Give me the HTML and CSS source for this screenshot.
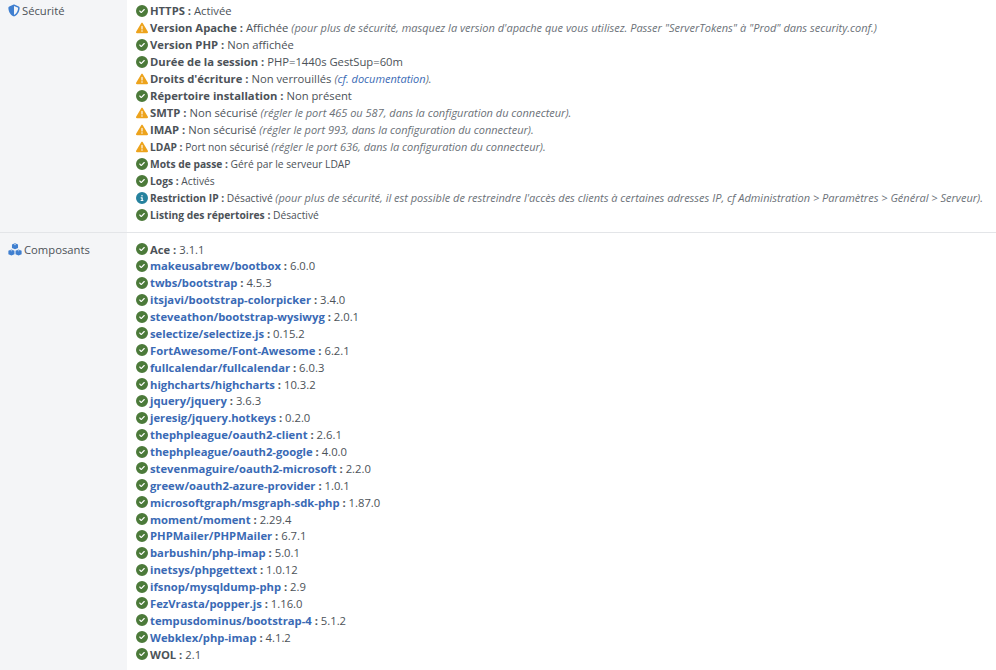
FILE: index.html
```html
<!DOCTYPE html>
<html lang="fr">
<head>
<meta charset="utf-8">
<title>Sécurité</title>
<link rel="stylesheet" href="styles.css">
</head>
<body>
<svg class="defs" width="0" height="0" aria-hidden="true">
  <symbol id="ok" viewBox="0 0 512 512"><path d="M256 512A256 256 0 1 0 256 0a256 256 0 1 0 0 512zM369 209L241 337c-9.400 9.400-24.600 9.400-33.900 0l-64-64c-9.400-9.400-9.400-24.600 0-33.900s24.600-9.400 33.900 0l47 47L335 175c9.400-9.400 24.600-9.400 33.900 0s9.400 24.600 0 33.900z"/></symbol>
  <symbol id="warn" viewBox="0 0 512 512"><path d="M256 32c14.200 0 27.300 7.500 34.500 19.800l216 368c7.300 12.400 7.300 27.700.2 40.100S486.300 480 472 480H40c-14.300 0-27.600-7.700-34.700-20.100s-7-27.800.2-40.100l216-368C228.700 39.500 241.800 32 256 32zm0 128c-13.300 0-24 10.700-24 24V296c0 13.300 10.700 24 24 24s24-10.700 24-24V184c0-13.300-10.700-24-24-24zm32 224a32 32 0 1 0-64 0 32 32 0 1 0 64 0z"/></symbol>
  <symbol id="info" viewBox="0 0 512 512"><path d="M256 512A256 256 0 1 0 256 0a256 256 0 1 0 0 512zM216 336h24V272H216c-13.300 0-24-10.700-24-24s10.700-24 24-24h48c13.300 0 24 10.700 24 24v88h8c13.300 0 24 10.700 24 24s-10.700 24-24 24H216c-13.300 0-24-10.700-24-24s10.700-24 24-24zm40-208a32 32 0 1 1 0 64 32 32 0 1 1 0-64z"/></symbol>
</svg>
<div class="panel">
  <section class="row">
    <div class="label">
      <svg class="label-icon" viewBox="0 0 512 512"><path d="M256 0c4.600 0 9.200 1 13.400 2.900L457.700 82.800c22 9.300 38.400 31 38.300 57.200-.5 99.200-41.300 280.700-213.600 363.200-16.700 8-36.100 8-52.800 0C57.300 420.700 16.500 239.200 16 140c-.1-26.200 16.300-47.900 38.300-57.200L242.700 2.900C246.800 1 251.400 0 256 0zm0 66.800V444.800C394 378 431.100 230.100 432 141.400L256 66.800z"/></svg>
      <span>Sécurité</span>
    </div>
    <ul class="list">
      <li class="item"><svg class="ic ok"><use href="#ok"/></svg><span><b>HTTPS :</b> Activée</span></li>
      <li class="item"><svg class="ic warn"><use href="#warn"/></svg><span><b>Version Apache :</b> Affichée <i class="note">(pour plus de sécurité, masquez la version d'apache que vous utilisez. Passer "ServerTokens" à "Prod" dans security.conf.)</i></span></li>
      <li class="item"><svg class="ic ok"><use href="#ok"/></svg><span><b>Version PHP :</b> Non affichée</span></li>
      <li class="item"><svg class="ic ok"><use href="#ok"/></svg><span><b>Durée de la session :</b> PHP=1440s GestSup=60m</span></li>
      <li class="item"><svg class="ic warn"><use href="#warn"/></svg><span><b>Droits d'écriture :</b> Non verrouillés <i class="note">(<a href="#">cf. documentation</a>).</i></span></li>
      <li class="item"><svg class="ic ok"><use href="#ok"/></svg><span><b>Répertoire installation :</b> Non présent</span></li>
      <li class="item"><svg class="ic warn"><use href="#warn"/></svg><span><b>SMTP :</b> Non sécurisé <i class="note">(régler le port 465 ou 587, dans la configuration du connecteur).</i></span></li>
      <li class="item"><svg class="ic warn"><use href="#warn"/></svg><span><b>IMAP :</b> Non sécurisé <i class="note">(régler le port 993, dans la configuration du connecteur).</i></span></li>
      <li class="item small"><svg class="ic warn"><use href="#warn"/></svg><span><b>LDAP :</b> Port non sécurisé <i class="note">(régler le port 636, dans la configuration du connecteur).</i></span></li>
      <li class="item small"><svg class="ic ok"><use href="#ok"/></svg><span><b>Mots de passe :</b> Géré par le serveur LDAP</span></li>
      <li class="item small"><svg class="ic ok"><use href="#ok"/></svg><span><b>Logs :</b> Activés</span></li>
      <li class="item small"><svg class="ic inf"><use href="#info"/></svg><span><b>Restriction IP :</b> Désactivé <i class="note">(pour plus de sécurité, il est possible de restreindre l'accès des clients à certaines adresses IP, cf Administration &gt; Paramètres &gt; Général &gt; Serveur).</i></span></li>
      <li class="item small"><svg class="ic ok"><use href="#ok"/></svg><span><b>Listing des répertoires :</b> Désactivé</span></li>
    </ul>
  </section>
  <section class="row">
    <div class="label">
      <svg class="label-icon wide" viewBox="0 0 576 512"><path fill-rule="evenodd" d="M288 0l125 52v140l-125 52-125-52V52zm0 36l-50 20 50 20 50-20zM141 256l125 52v140l-125 52-125-52V308zm0 36l-50 20 50 20 50-20zM435 256l125 52v140l-125 52-125-52V308zm0 36l-50 20 50 20 50-20z"/></svg>
      <span>Composants</span>
    </div>
    <ul class="list tight">
      <li class="item"><svg class="ic ok"><use href="#ok"/></svg><span><b>Ace :</b> 3.1.1</span></li>
      <li class="item"><svg class="ic ok"><use href="#ok"/></svg><span><b><a href="#">makeusabrew/bootbox</a> :</b> 6.0.0</span></li>
      <li class="item"><svg class="ic ok"><use href="#ok"/></svg><span><b><a href="#">twbs/bootstrap</a> :</b> 4.5.3</span></li>
      <li class="item"><svg class="ic ok"><use href="#ok"/></svg><span><b><a href="#">itsjavi/bootstrap-colorpicker</a> :</b> 3.4.0</span></li>
      <li class="item"><svg class="ic ok"><use href="#ok"/></svg><span><b><a href="#">steveathon/bootstrap-wysiwyg</a> :</b> 2.0.1</span></li>
      <li class="item"><svg class="ic ok"><use href="#ok"/></svg><span><b><a href="#">selectize/selectize.js</a> :</b> 0.15.2</span></li>
      <li class="item"><svg class="ic ok"><use href="#ok"/></svg><span><b><a href="#">FortAwesome/Font-Awesome</a> :</b> 6.2.1</span></li>
      <li class="item"><svg class="ic ok"><use href="#ok"/></svg><span><b><a href="#">fullcalendar/fullcalendar</a> :</b> 6.0.3</span></li>
      <li class="item"><svg class="ic ok"><use href="#ok"/></svg><span><b><a href="#">highcharts/highcharts</a> :</b> 10.3.2</span></li>
      <li class="item"><svg class="ic ok"><use href="#ok"/></svg><span><b><a href="#">jquery/jquery</a> :</b> 3.6.3</span></li>
      <li class="item"><svg class="ic ok"><use href="#ok"/></svg><span><b><a href="#">jeresig/jquery.hotkeys</a> :</b> 0.2.0</span></li>
      <li class="item"><svg class="ic ok"><use href="#ok"/></svg><span><b><a href="#">thephpleague/oauth2-client</a> :</b> 2.6.1</span></li>
      <li class="item"><svg class="ic ok"><use href="#ok"/></svg><span><b><a href="#">thephpleague/oauth2-google</a> :</b> 4.0.0</span></li>
      <li class="item"><svg class="ic ok"><use href="#ok"/></svg><span><b><a href="#">stevenmaguire/oauth2-microsoft</a> :</b> 2.2.0</span></li>
      <li class="item"><svg class="ic ok"><use href="#ok"/></svg><span><b><a href="#">greew/oauth2-azure-provider</a> :</b> 1.0.1</span></li>
      <li class="item"><svg class="ic ok"><use href="#ok"/></svg><span><b><a href="#">microsoftgraph/msgraph-sdk-php</a> :</b> 1.87.0</span></li>
      <li class="item"><svg class="ic ok"><use href="#ok"/></svg><span><b><a href="#">moment/moment</a> :</b> 2.29.4</span></li>
      <li class="item"><svg class="ic ok"><use href="#ok"/></svg><span><b><a href="#">PHPMailer/PHPMailer</a> :</b> 6.7.1</span></li>
      <li class="item"><svg class="ic ok"><use href="#ok"/></svg><span><b><a href="#">barbushin/php-imap</a> :</b> 5.0.1</span></li>
      <li class="item"><svg class="ic ok"><use href="#ok"/></svg><span><b><a href="#">inetsys/phpgettext</a> :</b> 1.0.12</span></li>
      <li class="item"><svg class="ic ok"><use href="#ok"/></svg><span><b><a href="#">ifsnop/mysqldump-php</a> :</b> 2.9</span></li>
      <li class="item"><svg class="ic ok"><use href="#ok"/></svg><span><b><a href="#">FezVrasta/popper.js</a> :</b> 1.16.0</span></li>
      <li class="item"><svg class="ic ok"><use href="#ok"/></svg><span><b><a href="#">tempusdominus/bootstrap-4</a> :</b> 5.1.2</span></li>
      <li class="item"><svg class="ic ok"><use href="#ok"/></svg><span><b><a href="#">Webklex/php-imap</a> :</b> 4.1.2</span></li>
      <li class="item"><svg class="ic ok"><use href="#ok"/></svg><span><b>WOL :</b> 2.1</span></li>
    </ul>
  </section>
</div>
</body>
</html>
```

FILE: styles.css
```css
html, body { margin: 0; padding: 0; background: #fff; }
body {
  width: 996px;
  height: 670px;
  overflow: hidden;
  font-family: "Open Sans", "Liberation Sans", sans-serif;
  font-size: 11.25px;
  color: #4c5258;
}
.defs { position: absolute; }
.panel { display: flex; flex-direction: column; }
.row { display: flex; border-bottom: 1px solid #e3e5e8; }
.row:last-child { border-bottom: 0; height: 437px; }
.label {
  width: 127px;
  box-sizing: border-box;
  flex: none;
  padding: 2px 0 0 8px;
  background: #f4f5f7;
  line-height: 17px;
  display: flex;
  align-items: flex-start;
  gap: 2px;
}
.row:last-child .label { padding-top: 8px; }
.label-icon { width: 12px; height: 13px; flex: none; margin-top: 2px; fill: #3f7fd0; }
.label-icon.wide { width: 14px; }
.list { list-style: none; margin: 0; padding: 2px 0 9px 9px; flex: 1; }
.list.tight { padding-top: 7.625px; }
.item { display: flex; align-items: center; gap: 2px; height: 17px; white-space: nowrap; }
.tight .item { height: 16.875px; }
.item.small { font-size: 10.25px; }
.ic { width: 12px; height: 12px; flex: none; }
.ok { fill: #4c7a3a; }
.warn { fill: #eda31c; }
.inf { fill: #26829e; }
b { font-weight: 700; }
.note { font-size: 11px; color: #6b7178; }
a { color: #3a6ab5; text-decoration: none; }
```
